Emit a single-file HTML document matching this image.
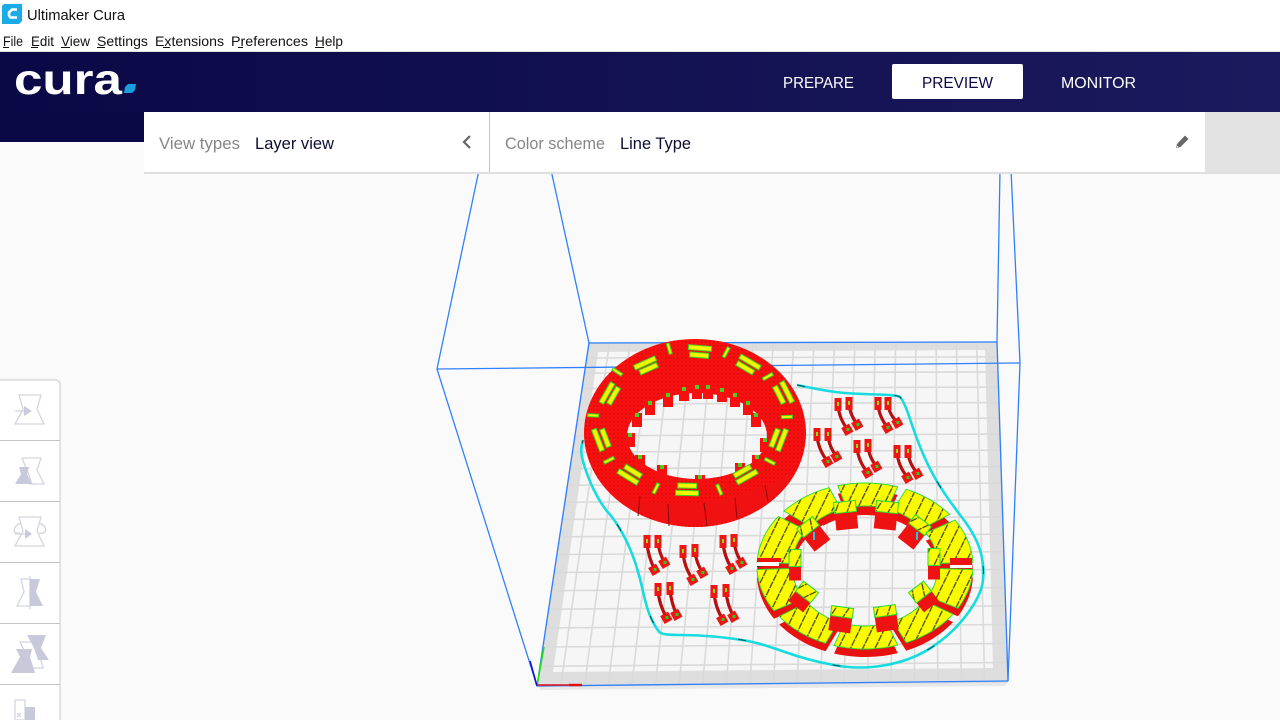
<!DOCTYPE html>
<html><head><meta charset="utf-8"><title>Ultimaker Cura</title>
<style>
html,body{margin:0;padding:0;width:1280px;height:720px;overflow:hidden;background:#fafafa}
svg{display:block;position:absolute;left:0;top:0}
text{font-family:"Liberation Sans",sans-serif}
</style></head><body>
<svg id="s" width="1280" height="720" viewBox="0 0 1280 720" xmlns="http://www.w3.org/2000/svg">
<defs>
<linearGradient id="hd" x1="0" x2="1" y1="0" y2="0"><stop offset="0" stop-color="#0a0845"/><stop offset="1" stop-color="#1b1a5e"/></linearGradient>
<pattern id="hatch" width="11" height="8" patternUnits="userSpaceOnUse" patternTransform="rotate(26)"><rect width="11" height="8" fill="#fafa00"/><rect x="3" y="0" width="1.300" height="7" fill="#4c4a10"/></pattern>
<pattern id="stip" width="4" height="4" patternUnits="userSpaceOnUse"><rect x="1" y="1" width="1.600" height="1.600" fill="#7a0505"/></pattern>
</defs>
<rect width="1280" height="720" fill="#fafafa"/>
<g id="scene"></g>

<!-- title bar -->
<rect width="1280" height="52" fill="#fff"/>
<rect y="51" width="1280" height="1" fill="#e2e2e2"/>
<path d="M4 4h18v17l-3 3H2V6z" fill="#19ace6"/>
<path d="M17 9.500h-5l-3 3v3l1.500 2H17" fill="none" stroke="#fff" stroke-width="2.600"/>
<text x="27" y="20" font-size="14.500" fill="#111" textLength="98" lengthAdjust="spacingAndGlyphs">Ultimaker Cura</text>
<g font-size="14" fill="#111">
<text x="3" y="46" textLength="20" lengthAdjust="spacingAndGlyphs">File</text>
<text x="31" y="46" textLength="23" lengthAdjust="spacingAndGlyphs">Edit</text>
<text x="61" y="46" textLength="29" lengthAdjust="spacingAndGlyphs">View</text>
<text x="97" y="46" textLength="51" lengthAdjust="spacingAndGlyphs">Settings</text>
<text x="155" y="46" textLength="69" lengthAdjust="spacingAndGlyphs">Extensions</text>
<text x="231" y="46" textLength="77" lengthAdjust="spacingAndGlyphs">Preferences</text>
<text x="315" y="46" textLength="28" lengthAdjust="spacingAndGlyphs">Help</text>
</g>
<g fill="#111"><rect x="3" y="47" width="6" height="1"/><rect x="31" y="47" width="7" height="1"/><rect x="61" y="47" width="9" height="1"/><rect x="97" y="47" width="8" height="1"/><rect x="163" y="47" width="7" height="1"/><rect x="238" y="47" width="5" height="1"/><rect x="315" y="47" width="9" height="1"/></g>

<!-- header -->
<rect y="52" width="1280" height="60" fill="url(#hd)"/>
<rect y="112" width="144" height="30" fill="#0a0845"/>
<text x="14" y="94" font-size="43" font-weight="700" fill="#fff" textLength="108" lengthAdjust="spacingAndGlyphs">cura</text>
<path d="M128 84h8l-1 6-3 3h-8l1-6z" fill="#1a9fdd"/>
<text x="783" y="88" font-size="16" fill="#fff" textLength="71" lengthAdjust="spacingAndGlyphs">PREPARE</text>
<rect x="892" y="64" width="131" height="35" rx="2" fill="#fff"/>
<text x="922" y="88" font-size="16" fill="#0a0845" textLength="71" lengthAdjust="spacingAndGlyphs">PREVIEW</text>
<text x="1061" y="88" font-size="16" fill="#fff" textLength="75" lengthAdjust="spacingAndGlyphs">MONITOR</text>

<!-- stage menu -->
<rect x="1205" y="112" width="75" height="60" fill="#e3e3e3"/>
<rect x="144" y="172" width="1136" height="2" fill="#dfdfdf"/>
<path d="M148 112H1205V172H148a4 4 0 0 1-4-4V116a4 4 0 0 1 4-4z" fill="#fff"/>
<rect x="489" y="112" width="1" height="60" fill="#c4c4c4"/>
<text x="159" y="149" font-size="17" fill="#868686" textLength="81" lengthAdjust="spacingAndGlyphs">View types</text>
<text x="255" y="149" font-size="17" fill="#0d0d35" textLength="79" lengthAdjust="spacingAndGlyphs">Layer view</text>
<text x="505" y="149" font-size="17" fill="#868686" textLength="100" lengthAdjust="spacingAndGlyphs">Color scheme</text>
<text x="620" y="149" font-size="17" fill="#0d0d35" textLength="71" lengthAdjust="spacingAndGlyphs">Line Type</text>
<path d="M470 136l-6 6 6 6" fill="none" stroke="#666" stroke-width="2.200"/>
<path d="M1176 148l1-4 8-8.500 3.500 3.500-8 8z" fill="#666"/><path d="M1176.500 147.500l2-.6-1.400-1.400z" fill="#eee"/>

<!-- toolbar -->
<path d="M-2 380H56a4 4 0 0 1 4 4V722H-2z" fill="#fff" stroke="#c8c8c8" stroke-width="1"/>
<g fill="#c4c4c4"><rect y="440" width="60" height="1"/><rect y="501" width="60" height="1"/><rect y="562" width="60" height="1"/><rect y="623" width="60" height="1"/><rect y="684" width="60" height="1"/></g>
<g fill="none" stroke="#d4d4e2" stroke-width="1.300">
<path d="M19 395H41L37 409 44 424H15L23 409Z"/>
<path d="M15 411H30"/>
<path d="M22 458H41L37 470 44 484H29"/>
<path d="M22 458L27 470 32 484"/>
<path d="M19 517H41L37 531 44 546H15L23 531Z"/>
<path d="M21 523C12 526 12 535 20 533M39 523C48 526 48 535 39 533"/>
<path d="M15 534H28"/>
<path d="M21 579H30V606H17L24 592Z"/>
<path d="M30 576V609"/>
<path d="M20 642H40L38 650 43 668H28L24 650Z"/>
<path d="M15 700H25V720H15Z"/>
<path d="M17 713l4 4M21 713l-4 4"/>
</g>
<g fill="#c9c9dc">
<path d="M32 411l-8-5v10z"/>
<path d="M19 467H29L27 474 32 484H15L21 474Z"/>
<path d="M32 534l-7-5v10z"/>
<path d="M30 579H40L36 592 43 606H30Z"/>
<path d="M27 635H46L41 648 49 660H38L34 648Z"/>
<path d="M16 649H32L30 657 35 673H11L20 657Z"/>
<rect x="25" y="707" width="10" height="13"/>
</g>
</svg>
<script>
(function(){
var NS='http://www.w3.org/2000/svg',scene=document.getElementById('scene');
function el(n,a,p){var e=document.createElementNS(NS,n);for(var k in a)e.setAttribute(k,a[k]);(p||scene).appendChild(e);return e}
function P(pts,o){var d='M'+pts.map(function(p){return p[0].toFixed(1)+' '+p[1].toFixed(1)}).join('L');o=o||{};o.d=d+(o.close?'Z':'');delete o.close;if(!o.fill)o.fill='none';return el('path',o)}
/* bed */
var c=[[589,343],[997,342],[1008,682],[537,686]];
var x0=c[0][0],y0=c[0][1],x1=c[1][0],y1=c[1][1],x2=c[2][0],y2=c[2][1],x3=c[3][0],y3=c[3][1];
var dx1=x1-x2,dx2=x3-x2,dx3=x0-x1+x2-x3,dy1=y1-y2,dy2=y3-y2,dy3=y0-y1+y2-y3,D=dx1*dy2-dx2*dy1;
var g=(dx3*dy2-dx2*dy3)/D,h=(dx1*dy3-dx3*dy1)/D,a=x1-x0+g*x1,b=x3-x0+h*x3,d=y1-y0+g*y1,e=y3-y0+h*y3;
function H(u,v){var w=g*u+h*v+1;return[(a*u+b*v+x0)/w,(d*u+e*v+y0)/w]}
P(c,{fill:'#dedede',close:1});
P([[537,686],[541,690],[1005,686],[1008,682]],{fill:'#e8e8e8',close:1});
P([[598,352],[985,350],[993,668],[553,672]],{fill:'#f6f6f6',close:1});
var N=20,i;
for(i=0;i<=N;i++){P([H(i/N,0),H(i/N,1)],{stroke:'#dadada','stroke-width':1.6});P([H(0,i/N),H(1,i/N)],{stroke:'#dadada','stroke-width':1.6})}
/* volume */
function B(p){P(p,{stroke:'#2f80ff','stroke-width':1.3,'stroke-linejoin':'round'})}
B([[589,343],[997,342]]);B([[589,343],[537,686]]);B([[537,686],[1008,681]]);B([[997,342],[1008,681]]);
B([[437,369],[1020,363]]);
B([[479,170],[437,369],[537,686]]);
B([[551,170],[589,343]]);
B([[1000,170],[997,342]]);
B([[1011,170],[1020,363],[1008,681]]);
P([[537,686],[544,647]],{stroke:'#20e020','stroke-width':1.6});
P([[537,686],[530,661]],{stroke:'#1010d0','stroke-width':1.6});
P([[537,685],[582,685]],{stroke:'#e01010','stroke-width':1.6});
P([[569,685],[582,685]],{stroke:'#e01010','stroke-width':2.4});
/* skirt */
var sk=[[797,385],[830,392],[860,394],[895,395],[903,398],[917,440],[930,470],[947,498],[977,537],[985,570],[980,597],[953,633],[913,660],[860,670],[807,660],[760,643],[730,638],[697,635],[663,635],[657,630],[647,610],[640,577],[630,547],[615,520],[603,507],[590,483],[580,453],[583,440]];
var sd='M'+sk[0].join(' ');
for(i=1;i<sk.length-1;i++){var m=[(sk[i][0]+sk[i+1][0])/2,(sk[i][1]+sk[i+1][1])/2];sd+='Q'+sk[i].join(' ')+' '+m.join(' ')}
sd+='L'+sk[sk.length-1].join(' ');
el('path',{d:sd,fill:'none',stroke:'#16dce0','stroke-width':2.6});
el('path',{d:sd,fill:'none',stroke:'#0a4a50','stroke-width':1,'stroke-dasharray':'8 90'});
/* clips */
var cl=[[838,405,848,430],[849,404,858,425],[878,404,888,428],[888,404,898,423],[817,435,828,462],[828,435,837,457],[857,447,868,473],[868,446,877,467],[897,452,908,478],[908,452,918,474],[647,542,655,570],[658,542,665,563],[683,552,693,580],[695,551,703,573],[723,542,732,569],[734,541,742,563],[658,590,667,618],[670,589,677,615],[714,592,723,620],[726,591,734,617]];
cl.forEach(function(q){
 var mx=q[0]+1,my=(q[1]+q[3])/2+1;
 el('path',{d:'M'+q[0]+' '+q[1]+'Q'+mx+' '+my+' '+q[2]+' '+q[3],fill:'none',stroke:'#b81010','stroke-width':3.2});
 el('rect',{x:q[0]-3.5,y:q[1]-7,width:7,height:13,fill:'#ee1515'});
 el('rect',{x:q[2]-5,y:q[3]-5,width:9,height:9,fill:'#ee1515',transform:'rotate(-30 '+q[2]+' '+q[3]+')'});
 el('rect',{x:q[0]-1,y:q[1]-3,width:2,height:4,fill:'#8ce010'});
 el('rect',{x:q[2]-1.5,y:q[3]-2,width:3,height:3,fill:'#30c820'});
});
/* ring helpers */
function ell(cx,cy,rx,ry){return 'M'+(cx-rx)+' '+cy+'A'+rx+' '+ry+' 0 1 0 '+(cx+rx)+' '+cy+'A'+rx+' '+ry+' 0 1 0 '+(cx-rx)+' '+cy+'Z'}
function E(cx,cy,rx,ry,t){t=t*Math.PI/180;return[cx+rx*Math.cos(t),cy+ry*Math.sin(t)]}
/* red ring */
var RP=ell(695,433,111,94)+ell(697,436,70,43);
el('path',{d:RP,fill:'#f81010','fill-rule':'evenodd'});
el('path',{d:RP,fill:'url(#stip)','fill-rule':'evenodd',opacity:.3});
/* front solid wall */
el('path',{d:'M612 493A111 94 0 0 0 795 472Q700 522 612 493Z',fill:'#f01212'});
el('path',{d:'M668 504l1 22M704 503l3 23M640 496l-2 20M735 498l2 20M765 485l3 16',stroke:'#8a0808','stroke-width':1,fill:'none'});
var teeth=[[668,400],[684,394],[697,392],[708,392],[722,395],[735,400],[748,408],[756,420],[637,420],[650,408],[630,440],[765,445],[640,462],[662,472],[700,482],[740,470],[757,462]];
teeth.forEach(function(t){el('rect',{x:t[0]-5,y:t[1]-7,width:10,height:14,fill:'#f81010'});el('rect',{x:t[0]-2,y:t[1]-7,width:4,height:4,fill:'#4ad020'})});
/* rim patches: tangent pairs */
var rc=[690,420,97,73];
var rim=[[700,348],[750,362],[787,392],[782,440],[747,477],[687,493],[628,477],[598,440],[607,393],[645,363]];
var ts=rim.map(function(r){return Math.atan2((r[1]-rc[1])/rc[3],(r[0]-rc[0])/rc[2])});
function patch(x,y,rot,w,ht){
 var gr=el('g',{transform:'translate('+x.toFixed(1)+' '+y.toFixed(1)+') rotate('+rot.toFixed(1)+')'});
 el('rect',{x:-w/2-1,y:-ht/2-1,width:w+2,height:ht+2,fill:'#30d820'},gr);
 el('rect',{x:-w/2,y:-ht/2,width:w,height:ht,fill:'#f4f400'},gr);
}
rim.forEach(function(r,k){
 var t=ts[k],tx=-rc[2]*Math.sin(t),ty=rc[3]*Math.cos(t),rot=Math.atan2(ty,tx)*180/Math.PI;
 patch(r[0],r[1],rot,22,4);
 patch(rc[0]+(r[0]-rc[0])*.92,rc[1]+(r[1]-rc[1])*.90,rot,18,4);
 var t2=(ts[(k+1)%10]);var dt=t2-t;while(dt<0)dt+=2*Math.PI;var tm=t+dt/2;
 var mx=rc[0]+rc[2]*1.0*Math.cos(tm),my=rc[1]+rc[3]*1.0*Math.sin(tm);
 var rr=Math.atan2(rc[3]*Math.sin(tm),rc[2]*Math.cos(tm))*180/Math.PI;
 patch(mx,my,rr,10,2);
});
/* yellow ring */
var gaps=[0,33,70,109,145,180,219,253,290,324,360];
var cx=865,cy=566,OR=[108,83],IR=[73,60],hw=2.4;
function band(t1,t2,dy){var p=[],t,n=14;for(t=0;t<=n;t++)p.push(E(cx,cy+dy,OR[0],OR[1],t1+(t2-t1)*t/n));for(t=n;t>=0;t--)p.push(E(cx,cy+dy,IR[0],IR[1],t1+(t2-t1)*t/n));return p}
(function(){var p=[],t;for(t=235;t<=305;t+=5)p.push(E(cx,cy,IR[0],IR[1],t));for(t=305;t>=235;t-=5)p.push(E(cx,cy+9,IR[0],IR[1],t));P(p,{fill:'#ee1212',close:1})})();
var S=[];for(i=0;i<10;i++){S.push([gaps[i]+hw,gaps[i+1]-hw])}
S.forEach(function(s){P(band(s[0],s[1],8),{fill:'#e81010',close:1})});
S.forEach(function(s){var p=band(s[0],s[1],0);P(p,{fill:'url(#hatch)',stroke:'#22dd33','stroke-width':.9,close:1})});
/* side gaps */
el('rect',{x:757,y:558,width:24,height:4,fill:'#ee1212'});el('rect',{x:757,y:562,width:22,height:4,fill:'#fff'});el('rect',{x:757,y:566,width:4,height:1,fill:'#333'});
el('rect',{x:950,y:558,width:22,height:7,fill:'#ee1212'});el('rect',{x:950,y:565,width:22,height:3,fill:'#fff'});
/* teeth */
[[845,507,-6,22,11,17],[887,507,6,22,11,17],[808,527,-38,20,11,18],[920,525,38,20,11,18],[795,558,0,12,17,14],[934,557,0,12,17,14],[807,592,38,19,13,12],[920,592,-38,19,13,12],[842,612,8,22,10,15],[885,611,-8,22,10,15]].forEach(function(t){
 var gr=el('g',{transform:'translate('+t[0]+' '+t[1]+') rotate('+t[2]+')'});
 el('rect',{x:-t[3]/2,y:-t[4]/2+3,width:t[3],height:t[4]+t[5]-3,fill:'#ee1212'},gr);
 el('rect',{x:-t[3]/2,y:-t[4]/2,width:t[3],height:t[4],fill:'url(#hatch)',stroke:'#22dd33','stroke-width':1},gr);
});
el('rect',{x:813,y:532,width:2,height:8,fill:'#20c8e0'});el('rect',{x:916,y:532,width:2,height:8,fill:'#20c8e0'});
})();
</script>
</body></html>
